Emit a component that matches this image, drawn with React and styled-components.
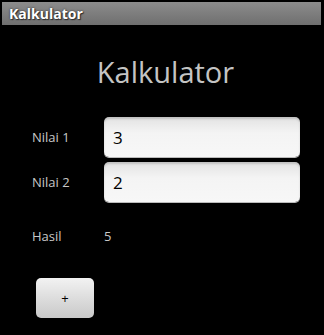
import React from "react";
import styled, { createGlobalStyle } from "styled-components";

const GlobalStyle = createGlobalStyle`
  html, body {
    margin: 0;
    padding: 0;
    background: #000;
  }
  body {
    font-family: "Open Sans", "Noto Sans", sans-serif;
  }
`;

const Screen = styled.div`
  width: 324px;
  height: 335px;
  background: #000;
  padding: 2px 3px 0 2px;
  box-sizing: border-box;
  overflow: hidden;
`;

const TitleBar = styled.div`
  height: 23px;
  background: linear-gradient(#8c8c8c, #6f6f6f);
  display: flex;
  align-items: center;
  padding-left: 7px;
  color: #fff;
  font-weight: bold;
  font-size: 14px;
  text-shadow: 0 0 2px #222, 1px 1px 1px #333;
`;

const Content = styled.div`
  padding: 0 0 0 30px;
`;

const Heading = styled.h1`
  margin: 32px 0 0 0;
  padding-right: 22px;
  text-align: center;
  font-weight: normal;
  font-size: 29px;
  line-height: 1;
  color: #c4c4c4;
`;

const Form = styled.div`
  margin-top: 31px;
  display: flex;
  flex-direction: column;
  gap: 5px;
`;

const Row = styled.div`
  display: flex;
  align-items: center;
  height: ${(p) => p.$h || 40}px;
`;

const Label = styled.span`
  width: 72px;
  font-size: 13px;
  color: #c8c8c8;
`;

const Value = styled.span`
  font-size: 13px;
  color: #c8c8c8;
`;

const Input = styled.input`
  width: 196px;
  height: 40px;
  box-sizing: border-box;
  border: none;
  border-radius: 5px;
  padding: 0 0 0 9px;
  font-family: "Open Sans", "Noto Sans", sans-serif;
  font-size: 17px;
  color: #000;
  background: linear-gradient(#e2e2e2, #f4f4f4 40%, #f7f7f7);
  box-shadow: inset 0 2px 2px rgba(0, 0, 0, 0.15), 0 1px 0 #bbb;
  outline: none;
`;

const Button = styled.button`
  display: block;
  margin-top: 13px;
  margin-left: 4px;
  width: 58px;
  height: 40px;
  border: none;
  border-radius: 5px;
  background: linear-gradient(#f2f2f2, #d9d9d9 60%, #c9c9c9);
  font-family: "Open Sans", "Noto Sans", sans-serif;
  font-size: 13px;
  color: #000;
  padding: 0;
`;

export default function App() {
  return (
    <>
      <GlobalStyle />
      <Screen>
        <TitleBar>Kalkulator</TitleBar>
        <Content>
          <Heading>Kalkulator</Heading>
          <Form>
            <Row>
              <Label>Nilai 1</Label>
              <Input defaultValue="3" />
            </Row>
            <Row>
              <Label>Nilai 2</Label>
              <Input defaultValue="2" />
            </Row>
            <Row $h={58}>
              <Label>Hasil</Label>
              <Value>5</Value>
            </Row>
          </Form>
          <Button>+</Button>
        </Content>
      </Screen>
    </>
  );
}
